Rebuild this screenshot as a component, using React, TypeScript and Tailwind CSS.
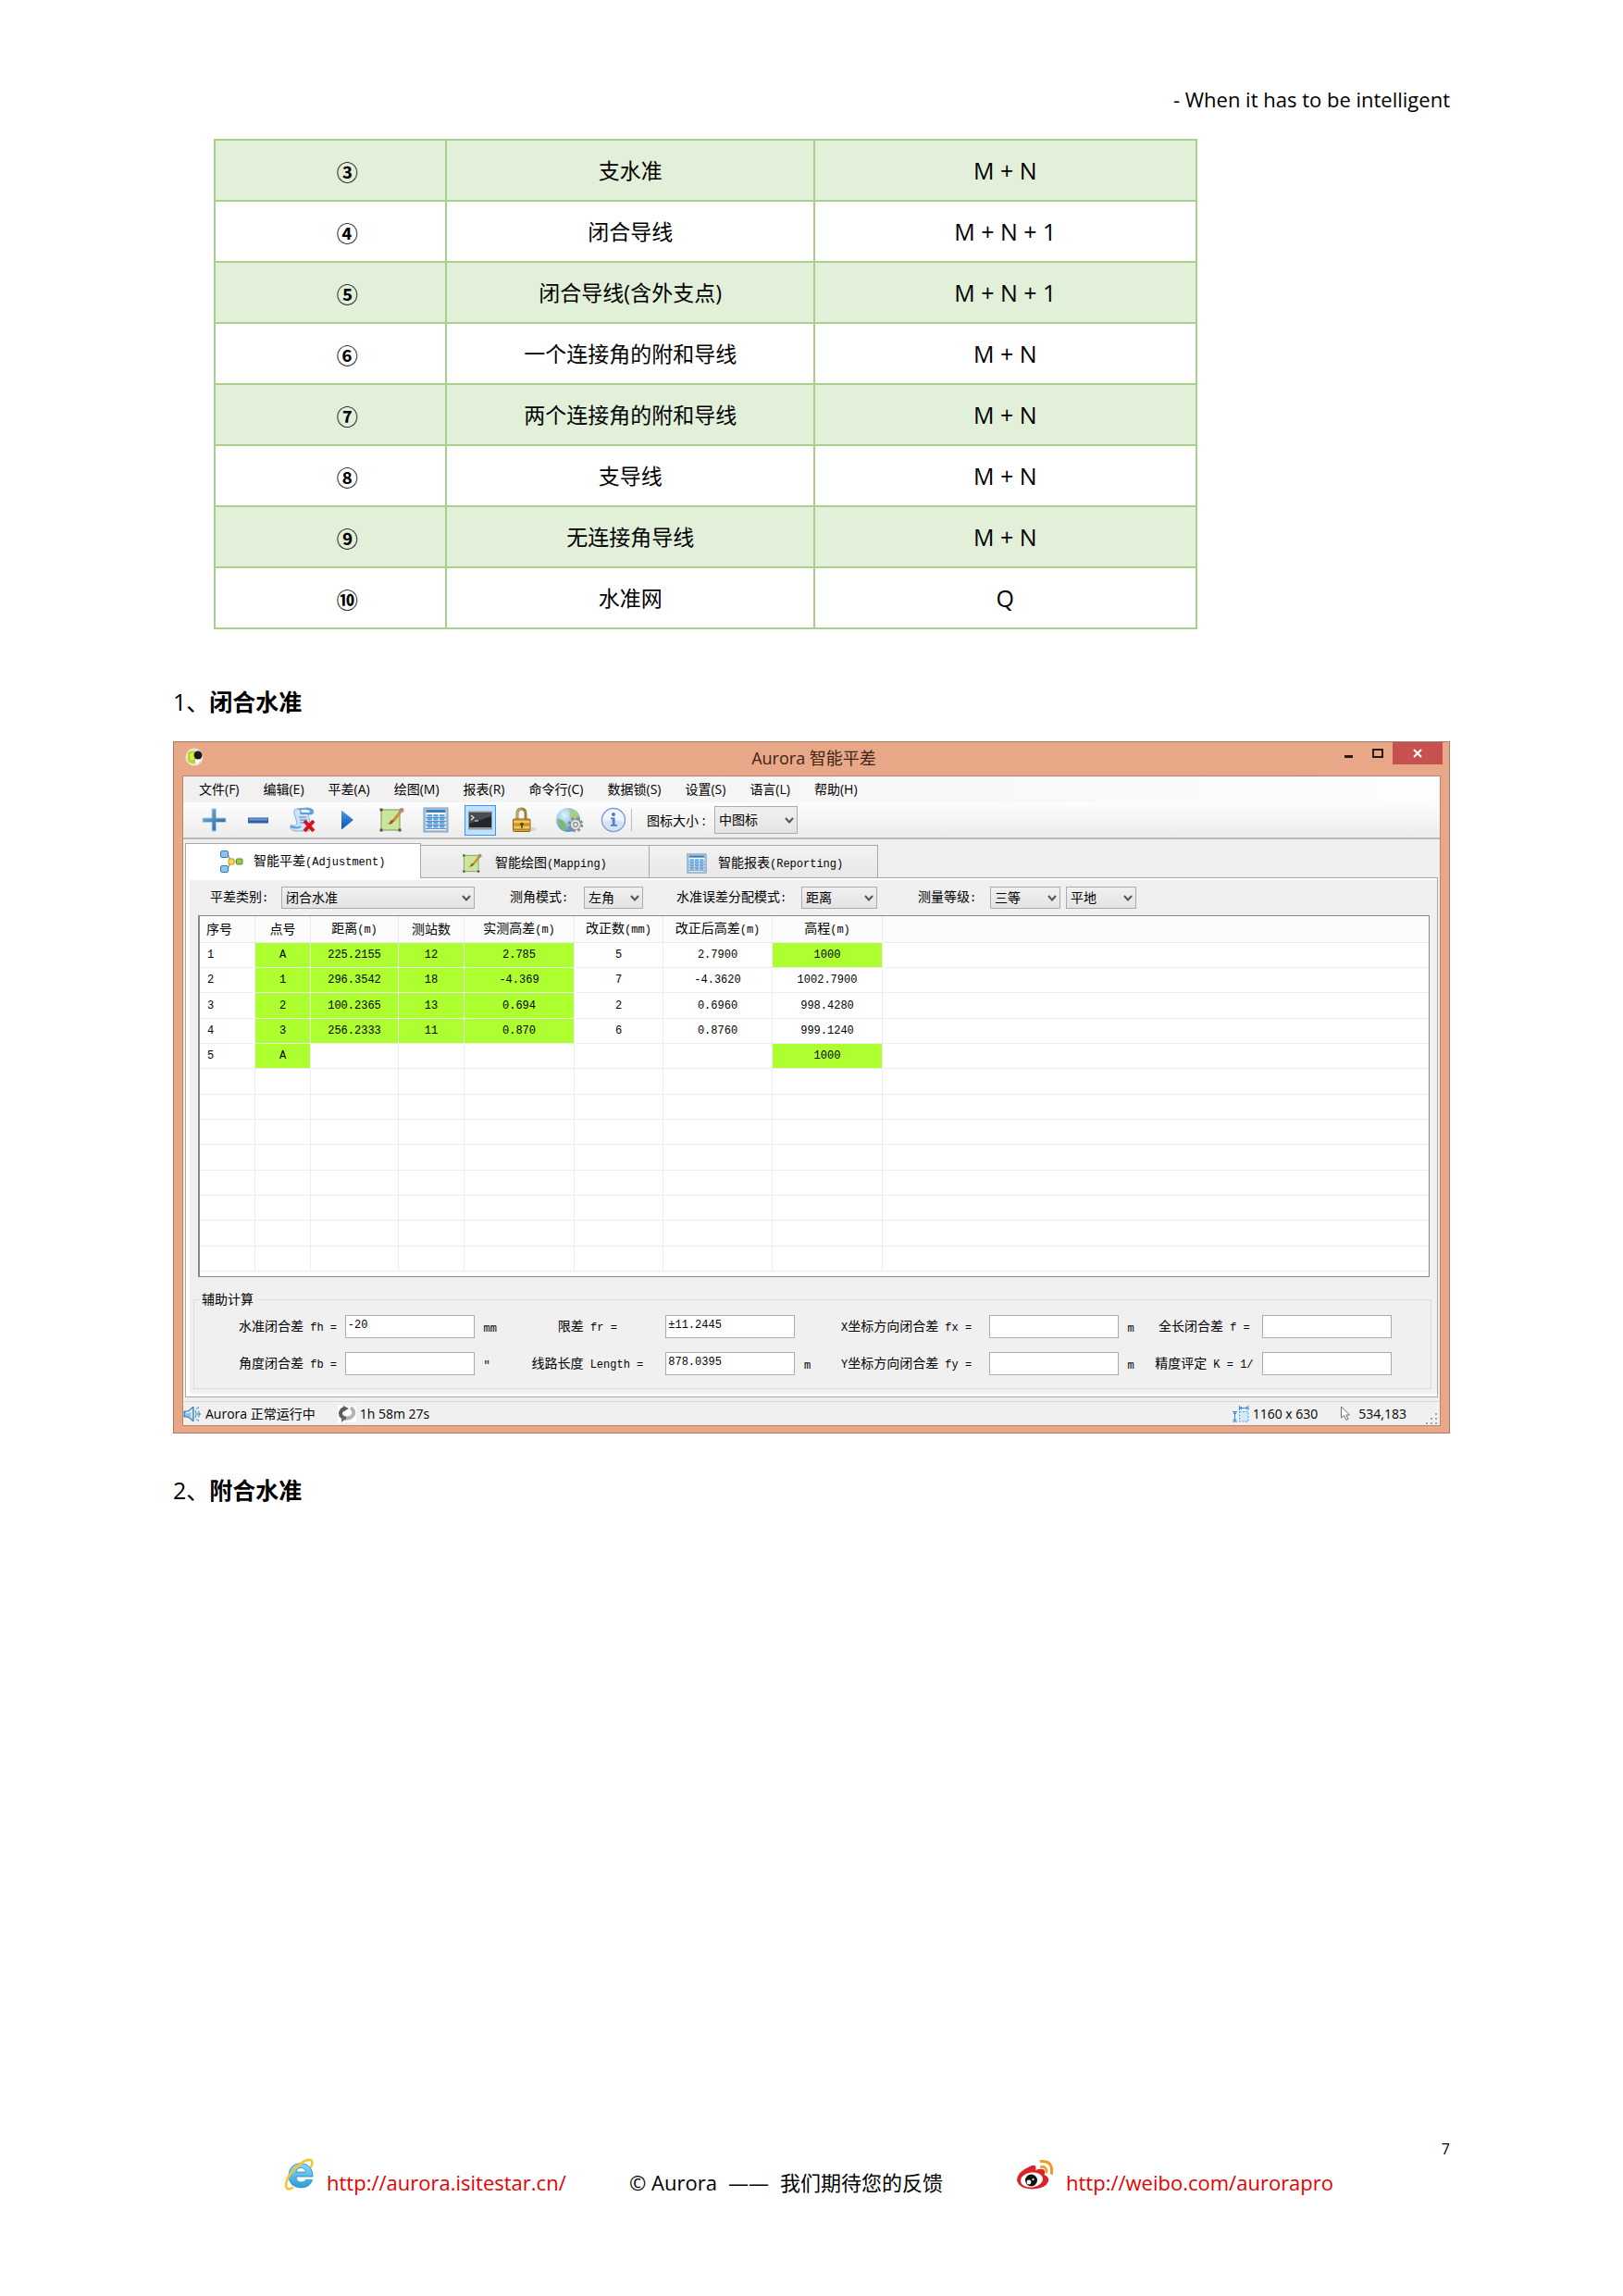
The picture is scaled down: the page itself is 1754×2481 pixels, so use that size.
import React from "react";

/* ---------- Text helpers ---------- */

function Mixed({ text }: { text: string }) {
  return (
    <>
      {text.split(/([\x20-\x7e±″]+)/).map((part, i) =>
        i % 2 ? (
          <span key={i} className="whitespace-pre font-['Liberation_Mono',monospace] text-[12px]">
            {part}
          </span>
        ) : (
          part
        )
      )}
    </>
  );
}

/* ---------- Icons ---------- */

function AppIcon() {
  return (
    <svg viewBox="0 0 20 20" className="size-5" aria-hidden="true">
      <circle cx="10" cy="10" r="9.5" fill="#e9e4dc" />
      <path d="M3 5Q9 2 11 4V17Q6 18 3 14Z" fill="#b5d92a" />
      <path d="M5 7L10 5V12L6 14Z" fill="#d6ec4a" />
      <circle cx="14" cy="8" r="4.5" fill="#191a1d" />
      <path d="M11 12Q14 14 17 12Q15 17 11 17Z" fill="#fff" />
    </svg>
  );
}

function PlusIcon() {
  return (
    <svg viewBox="0 0 28 28" className="size-7">
      <defs>
        <linearGradient id="plus" x1="0" y1="0" x2="1" y2="1">
          <stop offset="0" stopColor="#7fb0d6" />
          <stop offset="1" stopColor="#1f5f97" />
        </linearGradient>
      </defs>
      <path d="M12 2h4.500v10H27v4.500H16.500V26H12v-9.500H2V12h10z" fill="url(#plus)" stroke="#a9cfe8" strokeWidth="1" />
    </svg>
  );
}

function MinusIcon() {
  return (
    <svg viewBox="0 0 28 28" className="size-7">
      <rect x="3" y="11.500" width="22" height="6" fill="#2f5fa8" />
      <rect x="4" y="12.500" width="20" height="2" fill="#6f9ad6" />
    </svg>
  );
}

function ScriptDeleteIcon() {
  return (
    <svg viewBox="0 0 30 30" className="size-[30px]">
      <path d="M9 3Q5 3 6 8L9 18Q9 22 4 21Q1 20 2 24Q3 27 8 27H21Q25 26 24 21L21 9H25Q28 8 26 4Q24 2 20 2Z" fill="#cfe4f6" stroke="#7fb0d8" strokeWidth="1" />
      <path d="M9 3Q14 4 12 9H25Q28 7 26 4Q24 2 20 2Z" fill="#5f9fd8" />
      <path d="M13 4Q18 3 23 5Q24 7 21 7H14Z" fill="#e8f4fd" />
      <path d="M11 12H19M12 15H20M12 18H17" stroke="#6fa5d2" strokeWidth="1.300" />
      <path d="M2 22Q9 25 13 22" stroke="#5f9fd8" strokeWidth="2" fill="none" />
      <path d="M17 16L27 27M27 16L17 27" stroke="#d8121c" strokeWidth="4" />
    </svg>
  );
}

function PlayIcon() {
  return (
    <svg viewBox="0 0 28 28" className="size-7">
      <defs>
        <linearGradient id="play" x1="0" y1="0" x2="0" y2="1">
          <stop offset="0" stopColor="#4aa0ee" />
          <stop offset="1" stopColor="#0b4fae" />
        </linearGradient>
      </defs>
      <path d="M8 3.500L21 14L8 24.500Z" fill="url(#play)" />
    </svg>
  );
}

function DrawIcon({ className }: { className: string }) {
  return (
    <svg viewBox="0 0 28 28" className={className}>
      <rect x="3" y="3" width="20" height="22" fill="#cbe59e" stroke="#86a860" strokeWidth="1.200" />
      <path d="M1.500 1.500h3v3h-3zM1.500 23.500h3v3h-3zM21.500 23.500h3v3h-3z" fill="#4f5b3c" />
      <path d="M24 5L16 15" stroke="#c9903a" strokeWidth="3" />
      <path d="M17 14Q15 20 10 18Q13 17 13 14.500Z" fill="#8a5a22" />
      <circle cx="25" cy="3.500" r="2.500" fill="#a98a8c" />
    </svg>
  );
}

function SheetIcon({ className }: { className: string }) {
  return (
    <svg viewBox="0 0 28 28" className={className}>
      <rect x="1" y="1" width="26" height="26" fill="#a9c6de" stroke="#7d9cb8" strokeWidth="1" />
      <rect x="3.500" y="3" width="21" height="22" fill="#fff" />
      <rect x="3.500" y="3" width="21" height="3" fill="#3c7fc0" />
      {[8, 12, 16, 20].map((y) => (
        <g key={y} fill="#5aa7e6">
          <rect x="4.500" y={y} width="5.500" height="2.600" />
          <rect x="11.200" y={y} width="5.500" height="2.600" />
          <rect x="18" y={y} width="5.500" height="2.600" />
        </g>
      ))}
      <path d="M3 11.500H25M3 15.500H25M3 19.500H25M3 23.500H25" stroke="#2a5f96" strokeWidth="0.700" />
    </svg>
  );
}

function ConsoleIcon() {
  return (
    <svg viewBox="0 0 28 28" className="size-7">
      <rect x="1" y="4.500" width="26" height="20" fill="#8f979e" />
      <rect x="2" y="6" width="24" height="16" fill="#23272b" />
      <path d="M2 6H26V10L2 18Z" fill="#474d52" />
      <path d="M4 9l3 2.500L4 14M8 15h4" stroke="#e8eef2" strokeWidth="1.200" fill="none" />
    </svg>
  );
}

function LockIcon() {
  return (
    <svg viewBox="0 0 28 28" className="size-7">
      <ellipse cx="19" cy="24" rx="8" ry="2.500" fill="#ddd8ce" />
      <path d="M6 14V7Q6 2 10.500 2Q15 2 15 7V14" fill="none" stroke="#9b8140" strokeWidth="3" />
      <path d="M6 14V7Q6 2 10.500 2" fill="none" stroke="#dcc88a" strokeWidth="1" />
      <rect x="1.500" y="13" width="18.500" height="13.500" rx="1" fill="#d9a233" stroke="#8d651a" strokeWidth="1" />
      <path d="M2.500 16H19.500M2.500 22H19.500" stroke="#f4d37c" strokeWidth="1.500" />
      <path d="M2.500 19H19.500M2.500 24.500H19.500" stroke="#b98220" strokeWidth="1" />
      <circle cx="11" cy="18.500" r="1.800" fill="#5b3f0e" />
      <rect x="10.300" y="19" width="1.500" height="4" fill="#5b3f0e" />
    </svg>
  );
}

function GlobeGearIcon() {
  return (
    <svg viewBox="0 0 30 30" className="size-[30px]">
      <defs>
        <radialGradient id="globe" cx="0.350" cy="0.300" r="0.800">
          <stop offset="0" stopColor="#e3f4fc" />
          <stop offset="0.600" stopColor="#7fb7dd" />
          <stop offset="1" stopColor="#3f7fb3" />
        </radialGradient>
      </defs>
      <circle cx="14" cy="15" r="13" fill="url(#globe)" />
      <path d="M15 4Q24 3 26 12Q25 17 20 15Q14 13 16 9Z" fill="#a5cf86" />
      <path d="M3 14Q8 14 11 19Q13 24 10 27Q3 23 3 14Z" fill="#7fb86a" />
      <circle cx="22" cy="20" r="6.500" fill="none" stroke="#8a8d90" strokeWidth="3.500" strokeDasharray="2.600 2.500" />
      <circle cx="22" cy="20" r="5.500" fill="#e8e9ea" stroke="#8a8d90" strokeWidth="1" />
      <circle cx="22" cy="20" r="2.300" fill="#fff" stroke="#808386" strokeWidth="1.200" />
    </svg>
  );
}

function InfoIcon() {
  return (
    <svg viewBox="0 0 28 28" className="size-7">
      <circle cx="14" cy="14" r="12.500" fill="#f1f6fe" stroke="#7c9cd6" strokeWidth="1.500" />
      <path d="M3 16Q14 12 25 16Q23 25 14 25.500Q5 25 3 16Z" fill="#d4e2f8" />
      <circle cx="14" cy="8" r="2" fill="#4f7cc4" />
      <path d="M11 11.500h4.500V19H18v1.800h-7V19h1.800v-5.700H11z" fill="#4f7cc4" />
    </svg>
  );
}

function NodesIcon() {
  return (
    <svg viewBox="0 0 26 26" className="size-[26px]">
      <path d="M6 5H9L13 13L9 21H6M13 13H22" stroke="#8a9096" strokeWidth="1.200" fill="none" />
      <rect x="1.500" y="1.500" width="8" height="7" rx="1.500" fill="#8cc4f0" stroke="#3d7db5" />
      <rect x="1.500" y="17.500" width="8" height="7" rx="1.500" fill="#8cc4f0" stroke="#3d7db5" />
      <rect x="10" y="10" width="6" height="6" rx="1" fill="#f3dc4a" stroke="#b89a22" />
      <rect x="18.500" y="10" width="6.500" height="6" rx="1" fill="#93c847" stroke="#578c22" />
    </svg>
  );
}

function SpeakerIcon() {
  return (
    <svg viewBox="0 0 20 18" className="h-[18px] w-5">
      <path d="M1 6H5L11 1V17L5 12H1Z" fill="#8cc0e6" stroke="#2d6da3" strokeWidth="1" />
      <path d="M3 7.500H6L9 5V13" stroke="#e3f2fb" strokeWidth="1.500" fill="none" />
      <path d="M13 5Q15 9 13 13M14 3.500L17 1.500M15 9H19M14 14.500L17 16.500M16.500 5.500Q18 9 16.500 12.500" stroke="#5b9ed2" strokeWidth="1.300" fill="none" />
    </svg>
  );
}

function RefreshIcon() {
  return (
    <svg viewBox="0 0 20 18" className="h-[18px] w-5">
      <rect width="20" height="18" fill="#fff" />
      <path d="M14 2Q18 5 17 9Q15 14 9 13.500" stroke="#b4b4b4" strokeWidth="4" fill="none" />
      <path d="M9 13.500Q3 13 3 8Q4 3 8 3" stroke="#5c5c5c" strokeWidth="4" fill="none" />
      <path d="M6 0L12 3L6 6.500Z" fill="#5c5c5c" />
      <path d="M4 11V18L9 14Z" fill="#6b6b6b" />
    </svg>
  );
}

function SizeIcon() {
  return (
    <svg viewBox="0 0 18 18" className="size-[18px]">
      <rect x="7.500" y="6.500" width="9.500" height="10.500" fill="#d5eaf9" stroke="#4a9ee0" strokeDasharray="2 1.500" />
      <path d="M7.500 0V5M17 0V5M8 2.500H16M10 1L8 2.500L10 4M14.500 1L16.500 2.500L14.500 4M0 6.500H5M0 17H5M2.500 7V16.500M1 9L2.500 7L4 9M1 14.500L2.500 16.500L4 14.500" stroke="#2f8ad8" fill="none" />
    </svg>
  );
}

function CursorIcon() {
  return (
    <svg viewBox="0 0 12 17" className="h-[17px] w-3">
      <path d="M1.500 1V13L4.500 10.500L7 15.500L9 14.500L7 10H10.500Z" fill="#fff" stroke="#6e6e6e" />
    </svg>
  );
}

function ResizeGrip() {
  return (
    <svg viewBox="0 0 14 14" className="size-3.5 self-end">
      <path d="M11 1h2v2h-2zM6 6h2v2h-2zM11 6h2v2h-2zM1 11h2v2h-2zM6 11h2v2h-2zM11 11h2v2h-2z" fill="#a3a3a3" />
    </svg>
  );
}

function BrowserIcon() {
  return (
    <svg viewBox="0 0 34 36" className="h-9 w-[34px]">
      <defs>
        <linearGradient id="ie" x1="0" y1="0" x2="0" y2="1">
          <stop offset="0" stopColor="#8fdcf8" />
          <stop offset="1" stopColor="#2a9bd8" />
        </linearGradient>
      </defs>
      <path d="M31 20H13Q13.500 26 18.500 26Q22 26 23.500 23.500H30.500Q28 32 18 32Q5 31 5 18.500Q6 6 18 5.500Q31 6.500 31 20ZM13 15H23.500Q22.500 10.500 18.300 10.500Q14 10.500 13 15Z" fill="url(#ie)" stroke="#2588c4" strokeWidth="0.800" />
      <path d="M29 10Q32 3 28.500 2Q23 1 14 9Q5 17 2.500 26Q1 33 5 33.500Q7 33.500 10 31.500" fill="none" stroke="#f4c534" strokeWidth="2.600" />
    </svg>
  );
}

function WeiboIcon() {
  return (
    <svg viewBox="0 0 42 34" className="h-[34px] w-[42px]">
      <path d="M15 8Q21 5 21.500 9Q21.500 11 21 12Q30 9 31 13Q31.500 15 30.500 17Q36 19 35 24Q32 32 18 32.500Q3 32 1 23Q1 14 15 8Z" fill="#dd2128" />
      <ellipse cx="17" cy="22.500" rx="12" ry="8" fill="#fff" transform="rotate(-8 17 22.500)" />
      <circle cx="16.500" cy="23" r="6.500" fill="#111" />
      <circle cx="14" cy="25" r="2.400" fill="#fff" />
      <circle cx="18.500" cy="22" r="1.100" fill="#fff" />
      <path d="M27 8.500Q33 7.500 33 14" fill="none" stroke="#f29a1f" strokeWidth="2.600" strokeLinecap="round" />
      <path d="M27 2.500Q40 1.500 38.500 15.500" fill="none" stroke="#f29a1f" strokeWidth="3" strokeLinecap="round" />
    </svg>
  );
}

/* ---------- Controls ---------- */

function Select({ id, label, value, className }: { id: string; label?: string; value: string; className: string }) {
  return (
    <div className={`grid shrink-0 items-center ${className}`}>
      <select
        id={id}
        aria-label={label}
        className="col-start-1 row-start-1 h-full w-full appearance-none border border-[#acacac] bg-linear-to-b from-[#f0f0f0] to-[#e4e4e4] pl-1 text-[14px] leading-5 text-black"
      >
        <option>{value}</option>
      </select>
      <svg viewBox="0 0 10 7" className="pointer-events-none col-start-1 row-start-1 mr-1 h-[7px] w-2.5 justify-self-end">
        <path d="M1 1L5 5.500L9 1" fill="none" stroke="#555" strokeWidth="2" />
      </svg>
    </div>
  );
}

/* ---------- Data ---------- */

const schemes = [
  ["③", "支水准", "M + N"],
  ["④", "闭合导线", "M + N + 1"],
  ["⑤", "闭合导线(含外支点)", "M + N + 1"],
  ["⑥", "一个连接角的附和导线", "M + N"],
  ["⑦", "两个连接角的附和导线", "M + N"],
  ["⑧", "支导线", "M + N"],
  ["⑨", "无连接角导线", "M + N"],
  ["⑩", "水准网", "Q"],
];

const menus = ["文件(F)", "编辑(E)", "平差(A)", "绘图(M)", "报表(R)", "命令行(C)", "数据锁(S)", "设置(S)", "语言(L)", "帮助(H)"];

const tools = [
  { name: "添加", icon: <PlusIcon /> },
  { name: "删除", icon: <MinusIcon /> },
  { name: "清空", icon: <ScriptDeleteIcon /> },
  { name: "运行", icon: <PlayIcon /> },
  { name: "绘图", icon: <DrawIcon className="size-7" /> },
  { name: "报表", icon: <SheetIcon className="size-7" /> },
  { name: "命令行", icon: <ConsoleIcon />, active: true },
  { name: "数据锁", icon: <LockIcon /> },
  { name: "网络", icon: <GlobeGearIcon /> },
  { name: "关于", icon: <InfoIcon /> },
];

const columns = ["序号", "点号", "距离(m)", "测站数", "实测高差(m)", "改正数(mm)", "改正后高差(m)", "高程(m)", ""];

const rows: string[][] = [
  ["1", "A", "225.2155", "12", "2.785", "5", "2.7900", "1000"],
  ["2", "1", "296.3542", "18", "-4.369", "7", "-4.3620", "1002.7900"],
  ["3", "2", "100.2365", "13", "0.694", "2", "0.6960", "998.4280"],
  ["4", "3", "256.2333", "11", "0.870", "6", "0.8760", "999.1240"],
  ["5", "A", "", "", "", "", "", "1000"],
  ...Array.from({ length: 8 }, () => [] as string[]),
];

function isInput(row: number, col: number) {
  if (col === 1) return row < 5;
  if (col >= 2 && col <= 4) return row < 4;
  return col === 7 && (row === 0 || row === 4);
}

const results = [
  [
    { id: "fh", label: "水准闭合差 fh =", value: "-20", unit: "mm" },
    { id: "fr", label: "限差 fr =", value: "±11.2445", unit: "" },
    { id: "fx", label: "X坐标方向闭合差 fx =", value: "", unit: "m" },
    { id: "f", label: "全长闭合差 f =", value: "", unit: "" },
  ],
  [
    { id: "fb", label: "角度闭合差 fb =", value: "", unit: "″" },
    { id: "length", label: "线路长度 Length =", value: "878.0395", unit: "m" },
    { id: "fy", label: "Y坐标方向闭合差 fy =", value: "", unit: "m" },
    { id: "k", label: "精度评定 K = 1/", value: "", unit: "" },
  ],
];

const labelAlign = ["pl-12", "pr-[22px] text-center", "", "text-center"];

/* ---------- Sections ---------- */

function SchemeTable() {
  return (
    <table className="ml-11 w-[77%] table-fixed border-collapse text-center text-[23px]">
      <colgroup>
        <col className="w-[23.6%]" />
        <col className="w-[37.5%]" />
        <col />
      </colgroup>
      <tbody>
        {schemes.map(([no, name, count]) => (
          <tr key={no} className="h-[66px] odd:bg-[#e2efd9]">
            <td className="border-2 border-[#a8d08d] pt-1 pl-9 font-bold">{no}</td>
            <td className="border-2 border-[#a8d08d]">{name}</td>
            <td className="border-2 border-[#a8d08d] text-[25px] leading-8">{count}</td>
          </tr>
        ))}
      </tbody>
    </table>
  );
}

function TitleBar() {
  return (
    <div className="flex h-9 items-start">
      <div className="flex-1 pt-1.5 pl-3">
        <AppIcon />
      </div>
      <h3 className="text-[18px] leading-[34px] text-[#3d2418]">Aurora 智能平差</h3>
      <div className="flex flex-1 justify-end pr-[7px]">
        <button aria-label="最小化" className="flex h-6 w-8 items-center justify-center">
          <span className="mt-1.5 h-[3px] w-[9px] bg-[#2b1a12]" />
        </button>
        <button aria-label="最大化" className="flex h-6 w-8 items-center justify-center">
          <span className="h-2.5 w-3 border-2 border-[#2b1a12]" />
        </button>
        <button aria-label="关闭" className="flex h-6 w-[54px] items-center justify-center bg-[#c75050]">
          <svg viewBox="0 0 10 10" className="size-2.5">
            <path d="M1 1L9 9M9 1L1 9" stroke="#fff" strokeWidth="2" />
          </svg>
        </button>
      </div>
    </div>
  );
}

function Toolbar() {
  return (
    <div className="flex h-10 items-center border-b-2 border-[#b9b9b9] bg-linear-to-b from-[#fdfdfd] to-[#ececec] pl-4">
      <div className="flex gap-3.5">
        {tools.map((t) => (
          <button
            key={t.name}
            aria-label={t.name}
            aria-pressed={!!t.active}
            className="flex h-[33px] w-[34px] items-center justify-center border border-transparent aria-pressed:border-[#3399ff] aria-pressed:bg-[#c2e0ff]"
          >
            {t.icon}
          </button>
        ))}
      </div>
      <span className="ml-0.5 h-6 w-px bg-[#bdbdbd]" />
      <label htmlFor="icon-size" className="ml-4 w-[73px] shrink-0 text-[14px] whitespace-nowrap">
        图标大小 :
      </label>
      <Select id="icon-size" value="中图标" className="h-[30px] w-[90px]" />
    </div>
  );
}

function Tabs() {
  return (
    <div role="tablist" className="flex items-end border-b border-[#a9a9a9] bg-[#f0f0f0] pt-1 text-[14px] leading-5">
      <button role="tab" aria-selected="true" className="-mb-px flex h-[38px] w-[255px] items-center gap-[11px] border border-b-0 border-[#a9a9a9] bg-white pl-9">
        <NodesIcon />
        <span>
          <Mixed text="智能平差(Adjustment)" />
        </span>
      </button>
      <button role="tab" aria-selected="false" className="flex h-[35px] w-[247px] items-center gap-3.5 border border-b-0 border-l-0 border-[#a9a9a9] bg-linear-to-b from-[#f2f2f2] to-[#e8e8e8] pt-1 pl-11">
        <DrawIcon className="size-[22px]" />
        <span>
          <Mixed text="智能绘图(Mapping)" />
        </span>
      </button>
      <button role="tab" aria-selected="false" className="flex h-[35px] w-[247px] items-center gap-3 border border-b-0 border-l-0 border-[#a9a9a9] bg-linear-to-b from-[#f2f2f2] to-[#e8e8e8] pt-1 pl-10">
        <SheetIcon className="size-[22px]" />
        <span>
          <Mixed text="智能报表(Reporting)" />
        </span>
      </button>
    </div>
  );
}

function Filters() {
  return (
    <div className="flex items-center pt-[7px] pl-[22px] text-[14px] leading-5 whitespace-nowrap">
      <label htmlFor="kind" className="w-[77px]">
        <Mixed text="平差类别:" />
      </label>
      <Select id="kind" value="闭合水准" className="h-6 w-[209px]" />
      <label htmlFor="angle" className="ml-[38px] w-20">
        <Mixed text="测角模式:" />
      </label>
      <Select id="angle" value="左角" className="h-6 w-16" />
      <label htmlFor="dist" className="ml-9 w-[135px]">
        <Mixed text="水准误差分配模式:" />
      </label>
      <Select id="dist" value="距离" className="h-6 w-[82px]" />
      <label htmlFor="grade" className="ml-11 w-[78px]">
        <Mixed text="测量等级:" />
      </label>
      <Select id="grade" value="三等" className="h-6 w-[76px]" />
      <span className="w-1.5" />
      <Select id="terrain" label="地形" value="平地" className="h-6 w-[76px]" />
    </div>
  );
}

function DataGrid() {
  return (
    <div className="mt-[7px] mr-2 ml-[9px] border border-l-2 border-[#828790] bg-white pb-[5px]">
      <table className="w-full table-fixed border-separate border-spacing-0 text-center text-[14px] leading-5">
        <colgroup>
          <col className="w-[60px]" />
          <col className="w-[60px]" />
          <col className="w-[95px]" />
          <col className="w-[71px]" />
          <col className="w-[119px]" />
          <col className="w-24" />
          <col className="w-[118px]" />
          <col className="w-[119px]" />
          <col />
        </colgroup>
        <thead>
          <tr className="h-[29px] bg-[#fcfcfd]">
            {columns.map((c, i) => (
              <th key={i} className="border-r border-b border-[#e9ebf0] p-0 font-normal whitespace-nowrap first:pl-[7px] first:text-left last:border-r-0">
                <Mixed text={c} />
              </th>
            ))}
          </tr>
        </thead>
        <tbody>
          {rows.map((r, i) => (
            <tr key={i} className="h-[27px] nth-[3n]:h-7">
              {columns.map((_, j) => (
                <td
                  key={j}
                  data-input={isInput(i, j)}
                  className="border-r border-b border-[#ededf0] p-0 font-['Liberation_Mono',monospace] text-[12px] first:pl-2 first:text-left last:border-r-0 data-[input=true]:bg-[#adff2f]"
                >
                  {r[j]}
                </td>
              ))}
            </tr>
          ))}
        </tbody>
      </table>
    </div>
  );
}

function Results() {
  return (
    <fieldset className="mt-[15px] mr-1.5 mb-[5px] ml-1 border border-[#dcdcdc] text-[14px]">
      <legend className="ml-1.5 px-0.5 leading-[18px]">辅助计算</legend>
      <div className="grid gap-y-[15px] pt-2 pb-3.5">
        {results.map((line, i) => (
          <div key={i} className="grid grid-cols-[163fr_140fr_60fr_147fr_140fr_50fr_160fr_140fr_30fr_126fr_140fr_42fr] items-center whitespace-nowrap">
            {line.map((f, j) => (
              <React.Fragment key={f.id}>
                <label htmlFor={f.id} className={`leading-5 ${labelAlign[j]}`}>
                  <Mixed text={f.label} />
                </label>
                <input
                  id={f.id}
                  defaultValue={f.value}
                  className="h-[25px] w-full min-w-0 border border-[#ababab] bg-white px-0.5 pb-1 font-['Liberation_Mono',monospace] text-[12px]"
                />
                <span className="pl-2.5">
                  <Mixed text={f.unit} />
                </span>
              </React.Fragment>
            ))}
          </div>
        ))}
      </div>
    </fieldset>
  );
}

function StatusBar() {
  return (
    <div className="mt-1 flex h-[26px] items-center border-t border-[#d7d7d7] pr-0.5 text-[14px] leading-5">
      <SpeakerIcon />
      <span className="ml-1">Aurora 正常运行中</span>
      <span className="ml-6">
        <RefreshIcon />
      </span>
      <span className="ml-1 flex-1">1h 58m 27s</span>
      <SizeIcon />
      <span className="ml-1">1160 x 630</span>
      <span className="ml-6">
        <CursorIcon />
      </span>
      <span className="ml-2 mr-5">534,183</span>
      <ResizeGrip />
    </div>
  );
}

function AppWindow() {
  return (
    <section aria-label="Aurora 智能平差" className="border border-[#a87a64] bg-[#e8a888] text-black">
      <TitleBar />
      <div className="mr-[9px] mb-[7px] ml-[9px] border border-[#c47f6c] bg-[#f0f0f0]">
        <nav className="flex h-7 items-center gap-[26px] bg-linear-to-r from-[#f0f0f0] to-[#fdfdfd] pl-[17px] text-[14px] leading-5">
          {menus.map((m) => (
            <button key={m} className="whitespace-nowrap">
              {m}
            </button>
          ))}
        </nav>
        <Toolbar />
        <div className="mx-0.5">
          <Tabs />
          <div className="border border-t-0 border-[#a9a9a9] bg-white pt-0.5 pb-[3px] pl-1">
            <div className="flow-root bg-[#f0f0f0]">
              <Filters />
              <DataGrid />
              <Results />
            </div>
          </div>
        </div>
        <StatusBar />
      </div>
    </section>
  );
}

export default function App() {
  return (
    <div className="flex min-h-screen flex-col bg-white px-[187px] font-['Open_Sans','Noto_Sans_CJK_SC',sans-serif] text-black">
      <header className="pt-[92px] text-right text-[22px] leading-[30px]">- When it has to be intelligent</header>
      <main className="pt-7">
        <SchemeTable />
        <h2 className="mt-[60px] text-[25px] leading-9">
          1、<b>闭合水准</b>
        </h2>
        <div className="mt-[25px]">
          <AppWindow />
        </div>
        <h2 className="mt-[43px] text-[25px] leading-9">
          2、<b>附合水准</b>
        </h2>
      </main>
      <footer className="mt-auto pb-[97px]">
        <p className="text-right text-[16px] leading-5">7</p>
        <div className="flex items-center pl-[120px] text-[22px] leading-[34px] whitespace-nowrap">
          <span className="pb-4">
            <BrowserIcon />
          </span>
          <a href="http://aurora.isitestar.cn/" className="ml-3 w-[327px] text-[#e60000]">
            http://aurora.isitestar.cn/
          </a>
          <span className="flex w-[418px] gap-3">
            <span>© Aurora</span>
            <span>——</span>
            <span>我们期待您的反馈</span>
          </span>
          <span className="pb-4">
            <WeiboIcon />
          </span>
          <a href="http://weibo.com/aurorapro" className="ml-3 text-[#e60000]">
            http://weibo.com/aurorapro
          </a>
        </div>
      </footer>
    </div>
  );
}
